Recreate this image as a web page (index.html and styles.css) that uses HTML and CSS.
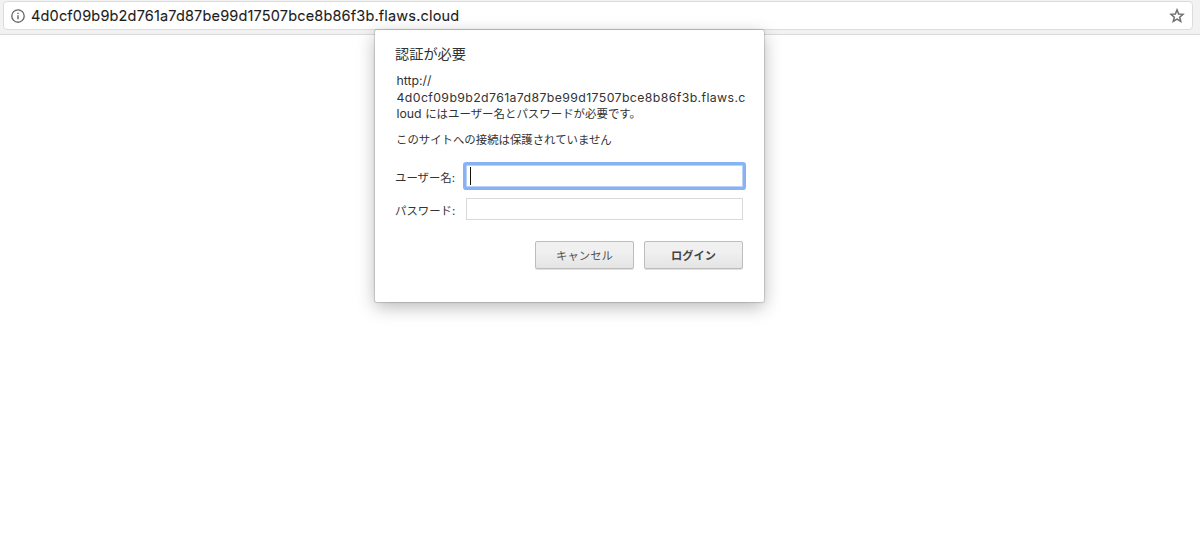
FILE: index.html
```html
<!DOCTYPE html>
<html lang="ja">
<head>
<meta charset="utf-8">
<title>認証が必要</title>
<link rel="stylesheet" href="styles.css">
</head>
<body>
<header class="toolbar">
  <div class="omnibox">
    <svg class="info-icon" viewBox="0 0 14 14" width="14" height="14">
      <circle cx="7" cy="7" r="6.2" fill="none" stroke="#666" stroke-width="1.35"/>
      <path d="M6.3 6.2h1.4v4H6.3zM6.3 3.7h1.4V5H6.3z" fill="#666"/>
    </svg>
    <span class="url">4d0cf09b9b2d761a7d87be99d17507bce8b86f3b.flaws.cloud</span>
    <svg class="star-icon" viewBox="0 0 16 16" width="16" height="16">
      <path d="M8 1.9l1.65 4.1 4.35.35-3.3 2.85 1.05 4.3L8 11.2l-3.75 2.3 1.05-4.3L2 6.35 6.35 6z" fill="none" stroke="#707070" stroke-width="1.5"/>
    </svg>
  </div>
</header>
<main class="page"></main>
<form class="dialog">
  <h1 class="title">認証が必要</h1>
  <p class="message">
    <span class="line">http://</span>
    <span class="line host">4d0cf09b9b2d761a7d87be99d17507bce8b86f3b.flaws.c</span>
    <span class="line">loud <span class="ja">にはユーザー名とパスワードが必要です。</span></span>
  </p>
  <p class="warning">このサイトへの接続は保護されていません</p>
  <div class="fields">
    <span class="label">ユーザー名:</span>
    <div class="input focused"><span class="caret"></span></div>
    <span class="label">パスワード:</span>
    <div class="input"></div>
  </div>
  <div class="actions">
    <button class="button" type="button">キャンセル</button>
    <button class="button primary" type="button">ログイン</button>
  </div>
</form>
</body>
</html>
```
FILE: styles.css
```css
* { box-sizing: border-box; }
body {
  margin: 0;
  height: 537px;
  overflow: hidden;
  background: #fff;
  font-family: Inter, "Noto Sans CJK JP", sans-serif;
  color: #333;
}
.toolbar {
  height: 35px;
  padding: 1px 7px 0 3px;
  background: #f2f2f2;
  border-bottom: 1px solid #d9d9d9;
}
.omnibox {
  display: flex;
  align-items: center;
  height: 29px;
  padding: 0 7px;
  background: #fff;
  border: 1px solid #dcdcdc;
  border-radius: 4px;
}
.info-icon { flex: none; }
.url {
  flex: 1;
  margin-left: 6px;
  font-size: 14.5px;
  line-height: 20px;
  letter-spacing: .165px;
  white-space: nowrap;
  color: #1c1c1c;
  -webkit-text-stroke: .1px #1c1c1c;
}
.dialog {
  position: absolute;
  left: 375px;
  top: 30px;
  width: 389px;
  height: 272px;
  padding: 13px 21px 0 20px;
  background: #fff;
  border-radius: 2px;
  box-shadow: 0 0 1px 1px rgba(0, 0, 0, .15), 0 5px 18px rgba(0, 0, 0, .28);
}
.title {
  margin: 0;
  font-size: 14.2px;
  font-weight: 400;
  line-height: 22px;
}
.message {
  margin: 8px 0 0 1.5px;
  font-size: 12.3px;
  line-height: 16.5px;
}
.line { display: block; white-space: nowrap; }
.host { letter-spacing: .385px; }
.ja { font-size: 11.45px; }
.warning {
  margin: 9px 0 0 1px;
  font-size: 11.4px;
  line-height: 17px;
}
.fields {
  display: grid;
  grid-template-columns: 71px 277px;
  grid-template-rows: 22px 22px;
  row-gap: 11px;
  margin-top: 16px;
  align-items: center;
}
.label {
  font-size: 11.4px;
  line-height: 18px;
  white-space: nowrap;
  padding-top: 4px;
}
.input {
  height: 22px;
  background: #fff;
  border: 1px solid #d9d9d9;
}
.input.focused {
  padding: 1px 3px;
  border-color: #bcd1f3;
  border-radius: 1px;
  box-shadow: 0 0 0 3px #86b2f6;
}
.caret {
  display: block;
  width: 1px;
  height: 18px;
  background: #111;
}
.actions {
  display: flex;
  justify-content: flex-end;
  gap: 10px;
  margin-top: 21px;
}
.button {
  width: 99px;
  height: 28px;
  padding: 0;
  border: 1px solid #bdbdbd;
  border-radius: 2px;
  background: linear-gradient(#f0f0f0, #f0f0f0 38%, #e4e4e4);
  box-shadow: 0 1px 0 rgba(0, 0, 0, .12);
  font-family: inherit;
  font-size: 11.4px;
  color: #555;
}
.primary { font-weight: 700; color: #444; font-size: 11.2px; }
```
